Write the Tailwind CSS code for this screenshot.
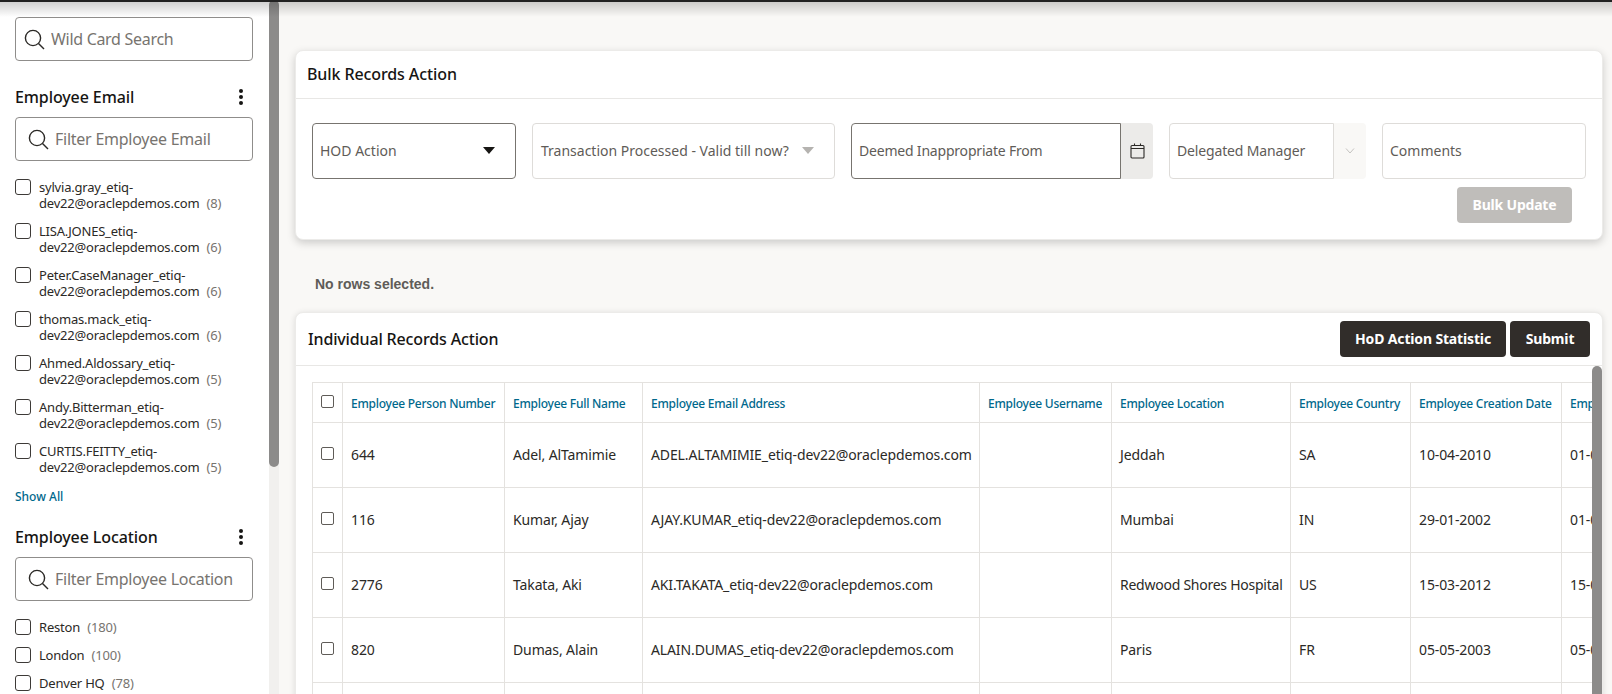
<!DOCTYPE html>
<html lang="en">
<head>
    <meta charset="UTF-8">
    <title>Bulk Records Action</title>
    <script src="https://cdn.jsdelivr.net/npm/@tailwindcss/browser@4"></script>
</head>
<body class="h-[694px] overflow-hidden bg-[#f9f8f6] font-['Noto_Sans',sans-serif] text-[#161513]">
    <!-- top shadow -->
    <div class="absolute top-0 left-0 z-10 h-[17px] w-full bg-[linear-gradient(to_bottom,#222_0,#222_2px,rgba(0,0,0,0.18)_2px,transparent_17px)]"></div>
    <div class="flex h-full">
        <!-- filter sidebar -->
        <aside class="relative h-full w-[279px] flex-none overflow-hidden bg-white">
            <div class="absolute top-0 right-0 h-full w-[10px] bg-[#f1f0ee]">
                <div class="h-[467px] w-full rounded-b-md rounded-t-md bg-[#8c8b8a]"></div>
            </div>
            <div class="w-[269px] pt-[17px] pl-[15px] pr-[16px]">
                <label class="flex h-[44px] items-center rounded border border-[#8f8d8b] pl-[7px]">
                    <svg class="h-[22px] w-[22px] flex-none" viewBox="0 0 22 22" fill="none" stroke="#2b2926" stroke-width="1.4"><circle cx="10" cy="10" r="7.6"/><path d="M15.5 15.5 L21 21"/></svg>
                    <input class="ml-[6px] w-[180px] text-[16px] tracking-[-0.3px] outline-none placeholder:text-[#77746f]" placeholder="Wild Card Search">
                </label>

                <div class="mt-[23px] flex h-[26px] items-center justify-between">
                    <h3 class="text-[16px] font-medium tracking-[-0.1px]">Employee Email</h3>
                    <svg class="mr-[9px] h-[18px] w-[6px]" viewBox="0 0 6 18" fill="#161513"><circle cx="3" cy="3" r="2"/><circle cx="3" cy="9" r="2"/><circle cx="3" cy="15" r="2"/></svg>
                </div>
                <label class="mt-[7px] flex h-[44px] items-center rounded border border-[#8f8d8b] pl-[11px]">
                    <svg class="h-[22px] w-[22px] flex-none" viewBox="0 0 22 22" fill="none" stroke="#2b2926" stroke-width="1.4"><circle cx="10" cy="10" r="7.6"/><path d="M15.5 15.5 L21 21"/></svg>
                    <input class="ml-[6px] w-[190px] text-[16px] tracking-[-0.25px] outline-none placeholder:text-[#77746f]" placeholder="Filter Employee Email">
                </label>

                <ul class="mt-[18px] flex flex-col gap-[8px] text-[13px] leading-[16px] tracking-[-0.2px] text-[#2b2926]">
                    <li class="flex h-[36px]"><span class="mr-[8px] h-[16px] w-[16px] flex-none rounded-[3px] border border-[#3d3a37]"></span><span>sylvia.gray_etiq-<br>dev22@oraclepdemos.com <span class="ml-[4px] text-[#77746f]">(8)</span></span></li>
                    <li class="flex h-[36px]"><span class="mr-[8px] h-[16px] w-[16px] flex-none rounded-[3px] border border-[#3d3a37]"></span><span>LISA.JONES_etiq-<br>dev22@oraclepdemos.com <span class="ml-[4px] text-[#77746f]">(6)</span></span></li>
                    <li class="flex h-[36px]"><span class="mr-[8px] h-[16px] w-[16px] flex-none rounded-[3px] border border-[#3d3a37]"></span><span>Peter.CaseManager_etiq-<br>dev22@oraclepdemos.com <span class="ml-[4px] text-[#77746f]">(6)</span></span></li>
                    <li class="flex h-[36px]"><span class="mr-[8px] h-[16px] w-[16px] flex-none rounded-[3px] border border-[#3d3a37]"></span><span>thomas.mack_etiq-<br>dev22@oraclepdemos.com <span class="ml-[4px] text-[#77746f]">(6)</span></span></li>
                    <li class="flex h-[36px]"><span class="mr-[8px] h-[16px] w-[16px] flex-none rounded-[3px] border border-[#3d3a37]"></span><span>Ahmed.Aldossary_etiq-<br>dev22@oraclepdemos.com <span class="ml-[4px] text-[#77746f]">(5)</span></span></li>
                    <li class="flex h-[36px]"><span class="mr-[8px] h-[16px] w-[16px] flex-none rounded-[3px] border border-[#3d3a37]"></span><span>Andy.Bitterman_etiq-<br>dev22@oraclepdemos.com <span class="ml-[4px] text-[#77746f]">(5)</span></span></li>
                    <li class="flex h-[36px]"><span class="mr-[8px] h-[16px] w-[16px] flex-none rounded-[3px] border border-[#3d3a37]"></span><span>CURTIS.FEITTY_etiq-<br>dev22@oraclepdemos.com <span class="ml-[4px] text-[#77746f]">(5)</span></span></li>
                </ul>
                <a class="mt-[10px] block text-[12px] leading-[16px] font-medium text-[#00688c]">Show All</a>

                <div class="mt-[19px] flex h-[26px] items-center justify-between">
                    <h3 class="text-[16px] font-medium tracking-[-0.1px]">Employee Location</h3>
                    <svg class="mr-[9px] h-[18px] w-[6px]" viewBox="0 0 6 18" fill="#161513"><circle cx="3" cy="3" r="2"/><circle cx="3" cy="9" r="2"/><circle cx="3" cy="15" r="2"/></svg>
                </div>
                <label class="mt-[7px] flex h-[44px] items-center rounded border border-[#8f8d8b] pl-[11px]">
                    <svg class="h-[22px] w-[22px] flex-none" viewBox="0 0 22 22" fill="none" stroke="#2b2926" stroke-width="1.4"><circle cx="10" cy="10" r="7.6"/><path d="M15.5 15.5 L21 21"/></svg>
                    <input class="ml-[6px] w-[190px] text-[16px] tracking-[-0.25px] outline-none placeholder:text-[#77746f]" placeholder="Filter Employee Location">
                </label>
                <ul class="mt-[18px] flex flex-col gap-[12px] text-[13px] leading-[16px] tracking-[-0.2px] text-[#2b2926]">
                    <li class="flex"><span class="mr-[8px] h-[16px] w-[16px] flex-none rounded-[3px] border border-[#3d3a37]"></span><span>Reston <span class="ml-[4px] text-[#77746f]">(180)</span></span></li>
                    <li class="flex"><span class="mr-[8px] h-[16px] w-[16px] flex-none rounded-[3px] border border-[#3d3a37]"></span><span>London <span class="ml-[4px] text-[#77746f]">(100)</span></span></li>
                    <li class="flex"><span class="mr-[8px] h-[16px] w-[16px] flex-none rounded-[3px] border border-[#3d3a37]"></span><span>Denver HQ <span class="ml-[4px] text-[#77746f]">(78)</span></span></li>
                </ul>
            </div>
        </aside>

        <main class="w-[1333px] flex-none pt-[50px] pl-[16px] pr-[9px]">
            <!-- bulk card -->
            <section class="h-[190px] rounded-lg border border-[#ecebe9] bg-white shadow-[0_3px_8px_rgba(0,0,0,0.18)]">
                <div class="flex h-[48px] items-center border-b border-[#e8e7e5] pb-[2px] pl-[11px] text-[16px] font-medium tracking-[-0.1px]">Bulk Records Action</div>
                <div class="flex gap-[16px] pt-[24px] pl-[16px] text-[14px] leading-[18px] text-[#5f5c58]">
                    <div class="flex h-[56px] w-[204px] items-center justify-between rounded border border-[#77746f] pr-[20px] pb-[1px] pl-[7px]">
                        <span>HOD Action</span>
                        <svg class="h-[7px] w-[12px]" viewBox="0 0 12 7" fill="#161513"><path d="M0 0H12L6 7Z"/></svg>
                    </div>
                    <div class="flex h-[56px] w-[303px] items-center justify-between rounded border border-[#dedcd9] pr-[20px] pb-[1px] pl-[8px]">
                        <span class="whitespace-nowrap">Transaction Processed - Valid till now?</span>
                        <svg class="h-[7px] w-[12px]" viewBox="0 0 12 7" fill="#b5b3b0"><path d="M0 0H12L6 7Z"/></svg>
                    </div>
                    <div class="flex h-[56px] w-[302px] rounded">
                        <div class="flex flex-1 items-center rounded-l border border-[#77746f] pb-[1px] pl-[7px] tracking-[-0.2px]">Deemed Inappropriate From</div>
                        <div class="flex w-[32px] items-center justify-center rounded-r bg-[#ecebe9]">
                            <svg class="h-[16px] w-[15px]" viewBox="0 0 15 16" fill="none" stroke="#2b2926" stroke-width="1.1"><rect x="1" y="2.5" width="13" height="12.5" rx="1"/><path d="M1 5.5H14M4.5 0.5V2.5M10.5 0.5V2.5"/></svg>
                        </div>
                    </div>
                    <div class="flex h-[56px] w-[197px] rounded">
                        <div class="flex flex-1 items-center rounded-l border border-[#dedcd9] pb-[1px] pl-[7px] tracking-[-0.15px]">Delegated Manager</div>
                        <div class="flex w-[32px] items-center justify-center rounded-r bg-[#f9f8f6]">
                            <svg class="h-[6px] w-[10px]" viewBox="0 0 10 6" fill="none" stroke="#c4c2bf"><path d="M1 0.5L5 5L9 0.5"/></svg>
                        </div>
                    </div>
                    <div class="flex h-[56px] w-[204px] items-center rounded border border-[#dedcd9] pb-[1px] pl-[7px]">Comments</div>
                </div>
                <div class="flex justify-end pt-[8px] pr-[30px]">
                    <button class="h-[36px] w-[115px] rounded bg-[#bfbdba] pb-[1px] text-[14px] font-bold tracking-[-0.2px] text-white">Bulk Update</button>
                </div>
            </section>

            <p class="mt-[36px] ml-[20px] h-[36px] font-['Liberation_Sans',sans-serif] text-[14px] leading-[16px] font-bold text-[#5f5c58]">No rows selected.</p>

            <!-- records card -->
            <section class="relative h-[500px] overflow-hidden rounded-t-lg border border-[#ecebe9] bg-white shadow-[0_1px_6px_rgba(0,0,0,0.12)]">
                <div class="flex h-[53px] items-center justify-between border-b border-[#e8e7e5] pr-[12px] pl-[12px]">
                    <h2 class="text-[16px] font-medium tracking-[-0.15px]">Individual Records Action</h2>
                    <div class="flex gap-[4px] pb-[1px] text-[14px] font-bold tracking-[-0.15px] text-white">
                        <button class="h-[36px] w-[166px] rounded bg-[#312d2a]">HoD Action Statistic</button>
                        <button class="h-[36px] w-[80px] rounded bg-[#312d2a]">Submit</button>
                    </div>
                </div>
                <div class="absolute top-[53px] right-0 z-10 h-[450px] w-[10px] rounded-t-md bg-[#8c8b8a]"></div>
                <div class="mt-[16px] ml-[16px] w-[1280px] overflow-hidden">
                    <table class="w-[1400px] table-fixed border-collapse text-[14px] tracking-[-0.12px]">
                        <colgroup>
                            <col class="w-[30px]"><col class="w-[162px]"><col class="w-[138px]"><col class="w-[337px]"><col class="w-[132px]"><col class="w-[179px]"><col class="w-[120px]"><col class="w-[151px]"><col class="w-[151px]">
                        </colgroup>
                        <thead class="text-left text-[12px] text-[#00688c]">
                            <tr class="h-[40px]">
                                <th class="border border-[#e4e2df] pt-[2px] text-center font-normal"><span class="inline-block h-[13px] w-[13px] rounded-[2px] border border-[#5f5c58]"></span></th>
                                <th class="border border-[#e4e2df] pt-[3px] pl-[8px] font-medium tracking-[-0.25px] whitespace-nowrap">Employee Person Number</th>
                                <th class="border border-[#e4e2df] pt-[3px] pl-[8px] font-medium tracking-[-0.25px] whitespace-nowrap">Employee Full Name</th>
                                <th class="border border-[#e4e2df] pt-[3px] pl-[8px] font-medium tracking-[-0.25px] whitespace-nowrap">Employee Email Address</th>
                                <th class="border border-[#e4e2df] pt-[3px] pl-[8px] font-medium tracking-[-0.25px] whitespace-nowrap">Employee Username</th>
                                <th class="border border-[#e4e2df] pt-[3px] pl-[8px] font-medium tracking-[-0.25px] whitespace-nowrap">Employee Location</th>
                                <th class="border border-[#e4e2df] pt-[3px] pl-[8px] font-medium tracking-[-0.25px] whitespace-nowrap">Employee Country</th>
                                <th class="border border-[#e4e2df] pt-[3px] pl-[8px] font-medium tracking-[-0.25px] whitespace-nowrap">Employee Creation Date</th>
                                <th class="border border-[#e4e2df] pt-[3px] pl-[8px] font-medium tracking-[-0.25px] whitespace-nowrap">Employee</th>
                            </tr>
                        </thead>
                        <tbody class="text-[#2b2926]">
                            <tr class="h-[65px]">
                                <td class="border border-[#e4e2df] pb-[2px] text-center"><span class="inline-block h-[13px] w-[13px] rounded-[2px] border border-[#5f5c58]"></span></td>
                                <td class="border border-[#e4e2df] pb-[1px] pl-[8px]">644</td>
                                <td class="border border-[#e4e2df] pb-[1px] pl-[8px]">Adel, AlTamimie</td>
                                <td class="border border-[#e4e2df] pb-[1px] pl-[8px] whitespace-nowrap">ADEL.ALTAMIMIE_etiq-dev22@oraclepdemos.com</td>
                                <td class="border border-[#e4e2df] pl-[8px]"></td>
                                <td class="border border-[#e4e2df] pb-[1px] pl-[8px]">Jeddah</td>
                                <td class="border border-[#e4e2df] pb-[1px] pl-[8px]">SA</td>
                                <td class="border border-[#e4e2df] pb-[1px] pl-[8px]">10-04-2010</td>
                                <td class="border border-[#e4e2df] pb-[1px] pl-[8px]">01-01-2011</td>
                            </tr>
                            <tr class="h-[65px]">
                                <td class="border border-[#e4e2df] pb-[2px] text-center"><span class="inline-block h-[13px] w-[13px] rounded-[2px] border border-[#5f5c58]"></span></td>
                                <td class="border border-[#e4e2df] pb-[1px] pl-[8px]">116</td>
                                <td class="border border-[#e4e2df] pb-[1px] pl-[8px]">Kumar, Ajay</td>
                                <td class="border border-[#e4e2df] pb-[1px] pl-[8px] whitespace-nowrap">AJAY.KUMAR_etiq-dev22@oraclepdemos.com</td>
                                <td class="border border-[#e4e2df] pl-[8px]"></td>
                                <td class="border border-[#e4e2df] pb-[1px] pl-[8px]">Mumbai</td>
                                <td class="border border-[#e4e2df] pb-[1px] pl-[8px]">IN</td>
                                <td class="border border-[#e4e2df] pb-[1px] pl-[8px]">29-01-2002</td>
                                <td class="border border-[#e4e2df] pb-[1px] pl-[8px]">01-01-2003</td>
                            </tr>
                            <tr class="h-[65px]">
                                <td class="border border-[#e4e2df] pb-[2px] text-center"><span class="inline-block h-[13px] w-[13px] rounded-[2px] border border-[#5f5c58]"></span></td>
                                <td class="border border-[#e4e2df] pb-[1px] pl-[8px]">2776</td>
                                <td class="border border-[#e4e2df] pb-[1px] pl-[8px]">Takata, Aki</td>
                                <td class="border border-[#e4e2df] pb-[1px] pl-[8px] whitespace-nowrap">AKI.TAKATA_etiq-dev22@oraclepdemos.com</td>
                                <td class="border border-[#e4e2df] pl-[8px]"></td>
                                <td class="border border-[#e4e2df] pb-[1px] pl-[8px] tracking-[-0.25px] whitespace-nowrap">Redwood Shores Hospital</td>
                                <td class="border border-[#e4e2df] pb-[1px] pl-[8px]">US</td>
                                <td class="border border-[#e4e2df] pb-[1px] pl-[8px]">15-03-2012</td>
                                <td class="border border-[#e4e2df] pb-[1px] pl-[8px]">15-03-2012</td>
                            </tr>
                            <tr class="h-[65px]">
                                <td class="border border-[#e4e2df] pb-[2px] text-center"><span class="inline-block h-[13px] w-[13px] rounded-[2px] border border-[#5f5c58]"></span></td>
                                <td class="border border-[#e4e2df] pb-[1px] pl-[8px]">820</td>
                                <td class="border border-[#e4e2df] pb-[1px] pl-[8px]">Dumas, Alain</td>
                                <td class="border border-[#e4e2df] pb-[1px] pl-[8px] whitespace-nowrap">ALAIN.DUMAS_etiq-dev22@oraclepdemos.com</td>
                                <td class="border border-[#e4e2df] pl-[8px]"></td>
                                <td class="border border-[#e4e2df] pb-[1px] pl-[8px]">Paris</td>
                                <td class="border border-[#e4e2df] pb-[1px] pl-[8px]">FR</td>
                                <td class="border border-[#e4e2df] pb-[1px] pl-[8px]">05-05-2003</td>
                                <td class="border border-[#e4e2df] pb-[1px] pl-[8px]">05-05-2003</td>
                            </tr>
                            <tr class="h-[65px]">
                                <td class="border border-[#e4e2df]"></td><td class="border border-[#e4e2df]"></td><td class="border border-[#e4e2df]"></td><td class="border border-[#e4e2df]"></td><td class="border border-[#e4e2df]"></td><td class="border border-[#e4e2df]"></td><td class="border border-[#e4e2df]"></td><td class="border border-[#e4e2df]"></td><td class="border border-[#e4e2df]"></td>
                            </tr>
                        </tbody>
                    </table>
                </div>
            </section>
        </main>
    </div>
</body>
</html>
